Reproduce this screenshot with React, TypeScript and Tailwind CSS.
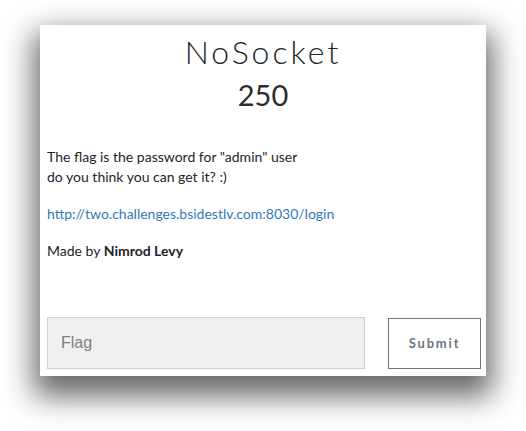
export default function App() {
  return (
    <div className="w-[526px] h-[431px] bg-white pt-[25px] pl-[40px]">
      <div className="w-[446px] h-[351px] bg-white shadow-[0_14px_28px_6px_rgba(0,0,0,0.6)] flex flex-col px-[7px] pb-[7px]">
        <h1 className="text-center text-[32px] leading-[38px] font-light tracking-[3px] text-[#212529] mt-[8px] font-['Lato',sans-serif]">
          NoSocket
        </h1>
        <h2 className="text-center text-[29px] leading-[36px] font-normal text-[#2a2d31] mt-[6px] font-['Lato',sans-serif]">
          250
        </h2>
        <div className="mt-[34px] text-[14px] leading-[20px] text-[#212529] font-['Lato',sans-serif]">
          <p>
            The flag is the password for "admin" user
            <br />
            do you think you can get it? :)
          </p>
          <p className="mt-[17px]">
            <a href="#" className="text-[#337ab7]">
              http://two.challenges.bsidestlv.com:8030/login
            </a>
          </p>
          <p className="mt-[17px]">
            Made by <b className="font-bold">Nimrod Levy</b>
          </p>
        </div>
        <div className="mt-auto flex items-center justify-between">
          <input
            placeholder="Flag"
            className="w-[318px] h-[52px] bg-[#f0f0f0] border border-[#ccd1d6] px-[13px] text-[16px] text-[#495057] placeholder:text-[#7b7f84] font-['Liberation_Sans',sans-serif] outline-none"
          />
          <button
            type="button"
            className="w-[93px] h-[51px] mr-[-2px] pt-[2px] border border-[#6c757d] bg-white text-[#6c757d] text-[13px] font-bold tracking-[1.8px] font-['Lato',sans-serif]"
          >
            Submit
          </button>
        </div>
      </div>
    </div>
  );
}
